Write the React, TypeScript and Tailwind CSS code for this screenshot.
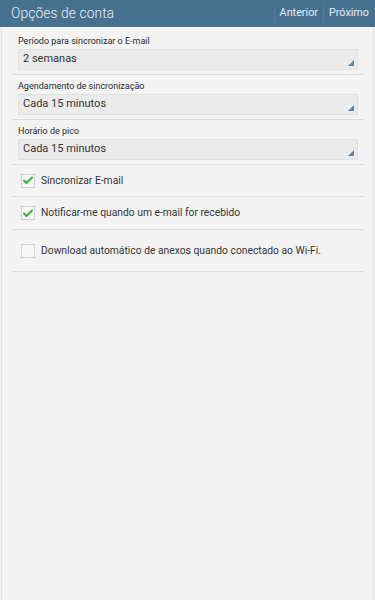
import { Check } from 'lucide-react';

const selects = [
  { label: 'Período para sincronizar o E-mail', value: '2 semanas' },
  { label: 'Agendamento de sincronização', value: 'Cada 15 minutos' },
  { label: 'Horário de pico', value: 'Cada 15 minutos' },
];

const checks = [
  { label: 'Sincronizar E-mail', checked: true, h: 'h-[32px]' },
  { label: 'Notificar-me quando um e-mail for recebido', checked: true, h: 'h-[33px]' },
  { label: 'Download automático de anexos quando conectado ao Wi-Fi.', checked: false, h: 'h-[42px]' },
];

export default function App() {
  return (
    <div className="w-[375px] h-[600px] flex flex-col bg-[#f3f3f3] font-['Roboto',sans-serif] overflow-hidden">
      {/* Action bar */}
      <div className="h-[27px] shrink-0 flex items-center bg-[#46718f] text-white">
        <span className="pl-[11px] text-[13.8px] font-light tracking-[0.1px] text-[#e6edf2]">Opções de conta</span>
        <div className="ml-auto flex items-center h-full">
          <div className="w-px h-[16px] bg-[#54809c]" />
          <span className="px-[5px] text-[10.8px] text-[#e8eef3]">Anterior</span>
          <div className="w-px h-[16px] bg-[#54809c]" />
          <span className="pl-[5px] pr-[6px] text-[10.8px] text-[#e8eef3]">Próximo</span>
        </div>
      </div>

      {/* Body */}
      <div className="flex-1 mx-px border-x border-[#e2e2e2] pl-[10px] pr-[9px]">
        <div className="pt-[3px]">
          {selects.map((s, i) => (
            <div key={i} className="border-b border-[#dcdcdc]">
              <div className="px-[6px] pt-[6px] pb-[4px]">
                <div className="text-[9px] leading-[11px] text-[#2a2a2a] mb-[2px]">{s.label}</div>
                <div className="relative h-[21px] bg-[#ebebeb] border border-[#e0e0e0] flex items-center pl-[4px]">
                  <span className="text-[11px] text-[#333]">{s.value}</span>
                  <svg className="absolute right-[3px] bottom-[3px]" width="6" height="6" viewBox="0 0 6 6">
                    <polygon points="6,0 6,6 0,6" fill="#5a85a4" />
                  </svg>
                </div>
              </div>
            </div>
          ))}
        </div>
        {checks.map((c, i) => (
          <div key={i} className={`${c.h} flex items-center border-b border-[#dcdcdc] pl-[9px]`}>
            <div className="w-[14px] h-[14px] border border-[#d4d4d4] bg-[#f7f7f7] flex items-center justify-center">
              {c.checked && <Check size={13} strokeWidth={4} className="text-[#35b335]" />}
            </div>
            <span className="ml-[6px] text-[10.3px] text-[#333]">{c.label}</span>
          </div>
        ))}
      </div>
    </div>
  );
}
